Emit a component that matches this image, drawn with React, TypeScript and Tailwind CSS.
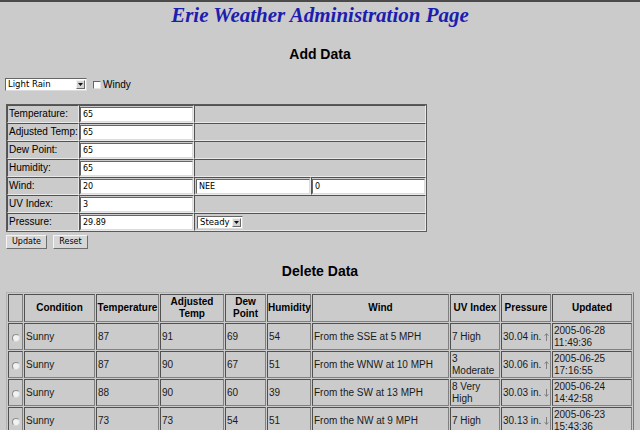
const formRows = [
  { label: "Temperature:", value: "65", kind: "plain" },
  { label: "Adjusted Temp:", value: "65", kind: "plain" },
  { label: "Dew Point:", value: "65", kind: "plain" },
  { label: "Humidity:", value: "65", kind: "plain" },
  { label: "Wind:", value: "20", kind: "wind" },
  { label: "UV Index:", value: "3", kind: "plain" },
  { label: "Pressure:", value: "29.89", kind: "pressure" },
];

const records = [
  { cond: "Sunny", temp: "87", adj: "91", dew: "69", hum: "54", wind: "From the SSE at 5 MPH", uv: "7 High", pres: "30.04 in.", up: true, updated: "2005-06-28 11:49:36" },
  { cond: "Sunny", temp: "87", adj: "90", dew: "67", hum: "51", wind: "From the WNW at 10 MPH", uv: "3 Moderate", pres: "30.06 in.", up: true, updated: "2005-06-25 17:16:55" },
  { cond: "Sunny", temp: "88", adj: "90", dew: "60", hum: "39", wind: "From the SW at 13 MPH", uv: "8 Very High", pres: "30.03 in.", up: false, updated: "2005-06-24 14:42:58" },
  { cond: "Sunny", temp: "73", adj: "73", dew: "54", hum: "51", wind: "From the NW at 9 MPH", uv: "7 High", pres: "30.13 in.", up: false, updated: "2005-06-23 15:43:36" },
];

// inset look of the old form cells
const inset = "border border-[#e9e9e9] border-t-[#525252] border-l-[#525252]";
const dcell = "border border-[#808080] border-t-[#505050] border-l-[#505050]";

function TextBox({ value }: { value: string }) {
  return (
    <input
      readOnly
      defaultValue={value}
      className="block h-[15px] w-full border border-[#dcdcdc] border-t-[#666] border-l-[#666] bg-white pl-[2px] font-['DejaVu_Sans',sans-serif] text-[8px] leading-none text-black outline-none"
    />
  );
}

function FakeSelect({ value, width }: { value: string; width: string }) {
  return (
    <div className={`relative flex h-[13px] items-center border border-[#dcdcdc] border-t-[#666] border-l-[#666] bg-white ${width}`}>
      <span className="pl-[2px] font-['DejaVu_Sans',sans-serif] text-[8.5px] leading-none text-black">{value}</span>
      {/* dropdown arrow button */}
      <span className="absolute right-px top-px flex h-[9px] w-[9px] items-center justify-center border border-[#f2f2f2] border-b-[#6a6a6a] border-r-[#6a6a6a] bg-[#d4d4d4]">
        <svg width="5" height="3" viewBox="0 0 5 3">
          <path d="M0 0H5L2.5 3Z" fill="#111" />
        </svg>
      </span>
    </div>
  );
}

function Button({ label, width }: { label: string; width: string }) {
  return (
    <button
      className={`flex h-[14px] items-center justify-center border border-[#f4f4f4] border-b-[#6e6e6e] border-r-[#6e6e6e] bg-[#d6d6d6] font-['DejaVu_Sans',sans-serif] text-[8px] leading-none text-black ${width}`}
    >
      {label}
    </button>
  );
}

function Trend({ up }: { up: boolean }) {
  return (
    <svg width="5" height="8" viewBox="0 0 5 8" className="ml-[3px] inline-block align-[-1px]">
      {up ? (
        <path d="M2.5 8V0.8M0.6 2.8L2.5 0.6L4.4 2.8" stroke="#777" strokeWidth="0.9" fill="none" />
      ) : (
        <path d="M2.5 0V7.2M0.6 5.2L2.5 7.4L4.4 5.2" stroke="#777" strokeWidth="0.9" fill="none" />
      )}
    </svg>
  );
}

export default function App() {
  return (
    <div className="h-[430px] w-[640px] overflow-hidden bg-[#cbcbcb] font-['Liberation_Sans',Arial,sans-serif] text-black">
      <div className="h-[2px] bg-[#4a4a4a]" />

      <h1 className="mt-px text-center font-['Liberation_Serif',serif] text-[21px] font-bold italic leading-[24px] text-[#1d1daf]">
        Erie Weather Administration Page
      </h1>

      {/* Add Data */}
      <h2 className="mt-[19px] text-center text-[14px] font-bold leading-[16px]">Add Data</h2>

      <div className="ml-[5px] mt-[16px] flex h-[13px] items-center">
        <FakeSelect value="Light Rain" width="w-[82px]" />
        <span className="ml-[6px] h-[8px] w-[8px] border border-[#e4e4e4] border-t-[#666] border-l-[#666] bg-white" />
        <span className="ml-[2px] text-[10px] leading-none">Windy</span>
      </div>

      <table className="ml-[6px] mt-[13px] w-[421px] table-fixed border-separate border-spacing-0 border border-[#5a5a5a] text-[10px]">
        <colgroup>
          <col className="w-[72px]" />
          <col className="w-[115px]" />
          <col className="w-[117px]" />
          <col className="w-[115px]" />
        </colgroup>
        <tbody>
          {formRows.map((r) => (
            <tr key={r.label}>
              <td className={`${inset} h-[18px] whitespace-nowrap px-px py-0 align-middle leading-none`}>{r.label}</td>
              <td className={`${inset} h-[18px] px-0 pb-0 pt-px align-top`}>
                <TextBox value={r.value} />
              </td>
              {r.kind === "wind" ? (
                <>
                  <td className={`${inset} h-[18px] pl-px pr-0 pb-0 pt-px align-top`}>
                    <TextBox value="NEE" />
                  </td>
                  <td className={`${inset} h-[18px] px-0 pb-0 pt-px align-top`}>
                    <TextBox value="0" />
                  </td>
                </>
              ) : r.kind === "pressure" ? (
                <td colSpan={2} className={`${inset} h-[18px] px-0 align-middle`}>
                  <div className="ml-[2px]">
                    <FakeSelect value="Steady" width="w-[46px]" />
                  </div>
                </td>
              ) : (
                <td colSpan={2} className={`${inset} h-[18px] p-0`} />
              )}
            </tr>
          ))}
        </tbody>
      </table>

      <div className="ml-[6px] mt-[3px] flex gap-[6px]">
        <Button label="Update" width="w-[41px]" />
        <Button label="Reset" width="w-[35px]" />
      </div>

      {/* Delete Data */}
      <h2 className="mt-[14px] text-center text-[14px] font-bold leading-[16px]">Delete Data</h2>

      <table className="ml-[6px] mt-[13px] w-[628px] table-fixed border-separate border-spacing-[1px] border border-[#b4b4b4] border-b-[#7a7a7a] border-r-[#7a7a7a] text-[10px] leading-[12px] text-[#1a1a1a]">
        <colgroup>
          <col className="w-[15px]" />
          <col className="w-[71px]" />
          <col className="w-[63px]" />
          <col className="w-[64px]" />
          <col className="w-[41px]" />
          <col className="w-[44px]" />
          <col className="w-[137px]" />
          <col className="w-[50px]" />
          <col className="w-[50px]" />
          <col className="w-[80px]" />
        </colgroup>
        <thead>
          <tr>
            {["", "Condition", "Temperature", "Adjusted Temp", "Dew Point", "Humidity", "Wind", "UV Index", "Pressure", "Updated"].map((h, i) => (
              <th key={i} className={`${dcell} h-[28px] p-0 text-center align-middle font-bold text-black`}>
                {h}
              </th>
            ))}
          </tr>
        </thead>
        <tbody>
          {records.map((r) => (
            <tr key={r.updated}>
              <td className={`${dcell} h-[27px] p-0 text-center align-middle`}>
                <span className="mt-[3px] inline-block h-[8px] w-[8px] rounded-full border border-[#8e8e8e] border-r-[#d8d8d8] border-b-[#d8d8d8] bg-[#f2f2f2] align-middle" />
              </td>
              <td className={`${dcell} h-[27px] px-px py-0 align-middle`}>{r.cond}</td>
              <td className={`${dcell} h-[27px] px-px py-0 align-middle`}>{r.temp}</td>
              <td className={`${dcell} h-[27px] px-px py-0 align-middle`}>{r.adj}</td>
              <td className={`${dcell} h-[27px] px-px py-0 align-middle`}>{r.dew}</td>
              <td className={`${dcell} h-[27px] px-px py-0 align-middle`}>{r.hum}</td>
              <td className={`${dcell} h-[27px] px-px py-0 align-middle`}>{r.wind}</td>
              <td className={`${dcell} h-[27px] px-px py-0 align-middle`}>{r.uv}</td>
              <td className={`${dcell} h-[27px] whitespace-nowrap px-px py-0 align-middle`}>
                {r.pres}
                <Trend up={r.up} />
              </td>
              <td className={`${dcell} h-[27px] px-px py-0 align-middle`}>{r.updated}</td>
            </tr>
          ))}
        </tbody>
      </table>
    </div>
  );
}
